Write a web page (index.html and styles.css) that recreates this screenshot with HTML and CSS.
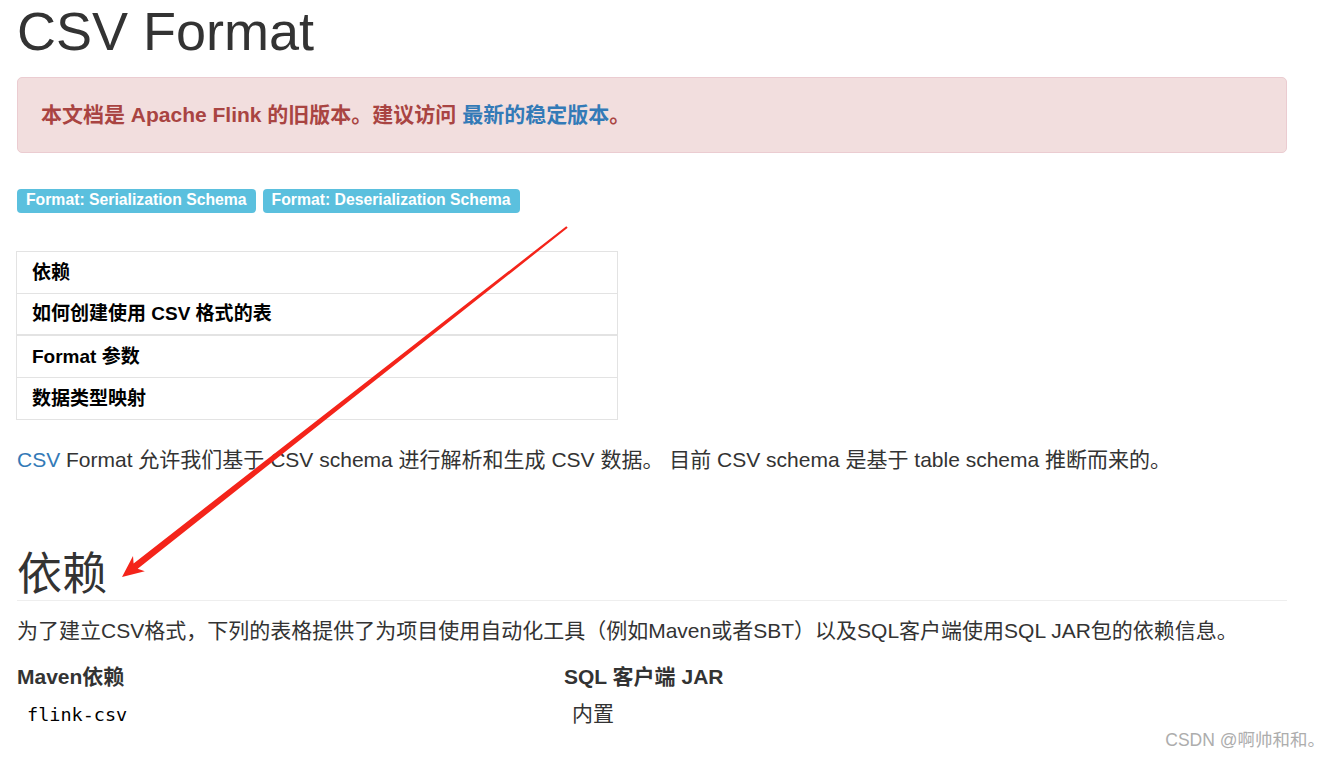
FILE: index.html
```html
<!DOCTYPE html>
<html lang="zh-CN">
  <head>
    <meta charset="UTF-8" />
    <title>CSV Format</title>
    <link rel="stylesheet" href="styles.css">
  </head>
  <body>
    <div class="page">
      <h1 class="title">CSV Format</h1>

      <div class="alert">
        本文档是 Apache Flink 的旧版本。建议访问 <a href="#">最新的稳定版本</a>。
      </div>

      <div class="labels">
        <span class="label">Format: Serialization Schema</span>
        <span class="label">Format: Deserialization Schema</span>
      </div>

      <ul class="toc">
        <li>依赖</li>
        <li class="thick">如何创建使用 CSV 格式的表</li>
        <li>Format 参数</li>
        <li>数据类型映射</li>
      </ul>

      <p class="intro">
        <a href="#">CSV</a> Format 允许我们基于 CSV schema 进行解析和生成 CSV 数据。 目前 CSV schema 是基于 table schema 推断而来的。
      </p>

      <h2 class="section">依赖</h2>

      <p class="desc">为了建立CSV格式，下列的表格提供了为项目使用自动化工具（例如Maven或者SBT）以及SQL客户端使用SQL JAR包的依赖信息。</p>

      <table class="deps">
        <colgroup>
          <col class="col-a" />
          <col />
        </colgroup>
        <thead>
          <tr>
            <th>Maven依赖</th>
            <th>SQL 客户端 JAR</th>
          </tr>
        </thead>
        <tbody>
          <tr>
            <td><code>flink-csv</code></td>
            <td>内置</td>
          </tr>
        </tbody>
      </table>
    </div>

    <!-- 标注箭头 -->
    <svg class="arrow" width="1336" height="759" viewBox="0 0 1336 759">
      <polygon
        fill="#f4241a"
        points="567.7,227.8 137.7,568.8 144.8,571.2 122,577 133,556 133.6,563.4 566.3,226.2"
      />
    </svg>

    <div class="watermark">CSDN @啊帅和和。</div>
  </body>
</html>
```

FILE: styles.css
```css
body {
  margin: 0;
  font-family: "Liberation Sans", Arial, "Noto Sans CJK SC", sans-serif;
  color: #333;
  background: #fff;
}
a {
  color: #337ab7;
  text-decoration: none;
}
.page {
  width: 1270px;
  padding: 0 17px;
}
.title {
  margin: 1px 0 0;
  font-size: 54px;
  line-height: 60px;
  font-weight: normal;
  color: #333;
}
.alert {
  margin-top: 16px;
  padding: 22px 23px;
  border: 1px solid #ebccd1;
  border-radius: 5px;
  background-color: #f2dede;
  color: #a94442;
  font-size: 21px;
  line-height: 30px;
  font-weight: bold;
}
.labels {
  margin-top: 36px;
  display: flex;
  gap: 7px;
}
.label {
  display: inline-block;
  padding: 3px 9px 5px;
  border-radius: 4px;
  background-color: #5bc0de;
  color: #fff;
  font-size: 15.75px;
  line-height: 16px;
  font-weight: bold;
}
.toc {
  list-style: none;
  margin: 38px 0 0 -1px;
  padding: 0;
  width: 600px;
  border: 1px solid #e3e3e3;
  border-top: none;
}
.toc li {
  border-top: 1px solid #e3e3e3;
  padding: 0 15px;
  line-height: 41px;
  font-size: 19px;
  font-weight: bold;
  color: #000;
}
.toc li.thick {
  border-bottom: 2px solid #e3e3e3;
  line-height: 40px;
}
.toc li.thick + li {
  border-top: none;
}
.intro {
  margin: 25px 0 0;
  font-size: 21px;
  line-height: 30px;
}
.section {
  margin: 75px 0 0;
  font-size: 45px;
  line-height: 50px;
  font-weight: normal;
  border-bottom: 1px solid #eee;
}
.desc {
  margin: 15px 0 0;
  font-size: 21px;
  line-height: 30px;
}
.deps {
  margin-top: 16px;
  width: 1270px;
  border-collapse: collapse;
  font-size: 21px;
  line-height: 30px;
}
.deps .col-a {
  width: 547px;
}
.deps th {
  text-align: left;
  padding: 0;
  font-weight: bold;
}
.deps td {
  padding: 7px 8px 0;
  vertical-align: top;
}
.deps code {
  padding: 0 2px;
  font-family: "DejaVu Sans Mono", "Liberation Mono", monospace;
  font-size: 18.5px;
  color: #000;
}
.arrow {
  position: absolute;
  top: 0;
  left: 0;
  pointer-events: none;
}
.watermark {
  position: absolute;
  right: 11px;
  top: 730px;
  font-size: 17.5px;
  line-height: 20px;
  color: #adadad;
  text-shadow: 0 0 1px #fff;
}
```
